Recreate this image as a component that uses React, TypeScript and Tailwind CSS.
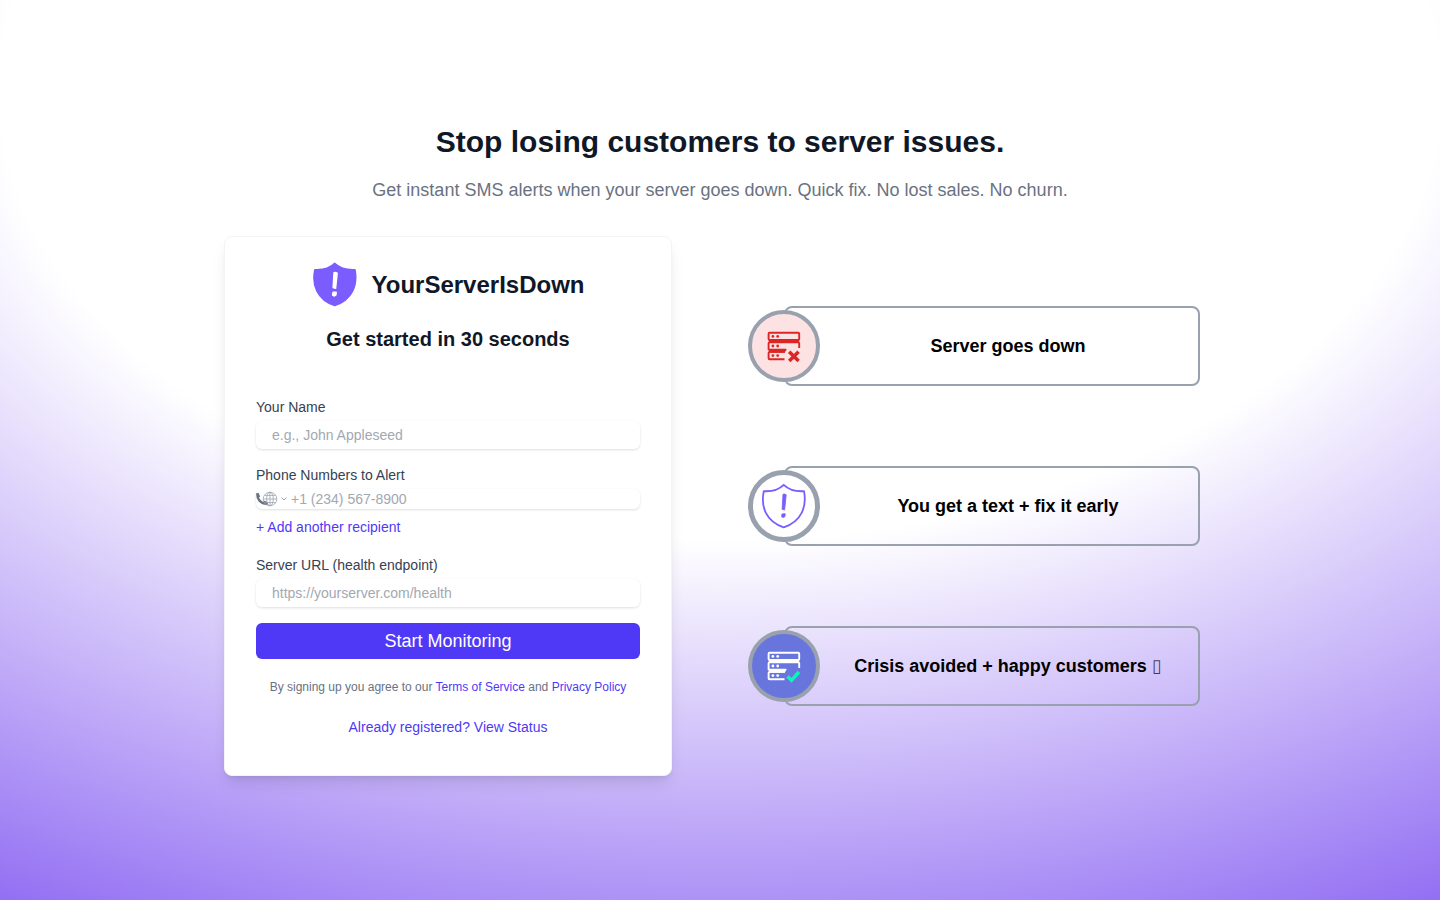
import React from "react";

const steps = [
  { text: "Server goes down", circle: "border-4 bg-[#fce2e2]", icon: <ServerIcon color="#dc2626" mark="cross" /> },
  { text: "You get a text + fix it early", circle: "border-5 bg-white", icon: <ShieldIcon className="size-12" outlined /> },
  { text: "Crisis avoided + happy customers", ending: "▯", circle: "border-4 bg-[#6875dd]", icon: <ServerIcon color="#ffffff" mark="check" /> },
];

function ShieldIcon({ className, outlined = false }: { className: string; outlined?: boolean }) {
  const markColor = outlined ? "#7a5cff" : "#ffffff";
  const markStroke = outlined ? 0.8 : 1.4;
  return (
    <svg viewBox={outlined ? "0 0 48 48" : "1 0.6 48 48"} className={`shrink-0 ${className}`} aria-hidden="true">
      <path
        d="M23.7 2.8C27.5 6.5 34.5 9.7 44 9.2C47 24.5 41.5 39.5 23.7 45.3C6 39.5 0.5 24.5 3.8 9.2C13 9.7 20 6.5 23.7 2.8Z"
        fill={outlined ? "none" : "#7a5cff"}
        stroke="#7a5cff"
        strokeWidth={outlined ? 1.8 : 1.4}
        strokeLinejoin="round"
      />
      <path d="M23 12.2Q25 11.6 26.2 12.8L24.6 28L22.1 27.3Z" fill={markColor} stroke={markColor} strokeWidth={markStroke} strokeLinejoin="round" />
      <path d="M22 31.9L25.2 31.7L25 34.5L23.4 35.6L21.6 34.8Z" fill={markColor} stroke={markColor} strokeWidth={markStroke} strokeLinejoin="round" />
    </svg>
  );
}

function ServerIcon({ color, mark }: { color: string; mark: "cross" | "check" }) {
  return (
    <svg viewBox="0 0 40 40" className="size-10" fill="none" aria-hidden="true">
      <g stroke={color} strokeWidth="1.9" strokeLinejoin="round">
        <rect x="4.6" y="6.7" width="30.6" height="7.3" rx="1" />
        <path d="M35.2 22V17.3Q35.2 16.3 34.2 16.3H5.6Q4.6 16.3 4.6 17.3V23.6H22" />
        <path d="M21 25.9H5.6Q4.6 25.9 4.6 26.9V32.2Q4.6 33.2 5.6 33.2H20.5" />
      </g>
      <path d="M5 14H35V17H5Z M5 23.2H23L20.5 26.7H5Z" fill={color} />
      {[10.4, 20, 29.6].map((y) => (
        <g key={y} fill={color}>
          <circle cx="8.9" cy={y} r="1.4" />
          <circle cx="13.7" cy={y} r="1.4" />
        </g>
      ))}
      {mark === "cross" ? (
        <path d="M25.2 25.7L34.6 35.1M34.6 25.7L25.2 35.1" stroke={color} strokeWidth="3.5" />
      ) : (
        <path d="M23.5 30.5L27.500 34.3L35 26" stroke="#0cf5b8" strokeWidth="3.5" />
      )}
    </svg>
  );
}

function PhoneIcon() {
  return (
    <svg viewBox="0 0 14 14" className="size-[14px] shrink-0" aria-hidden="true">
      <path
        d="M0 1.4L2.5 .8L4.1 4.4L3 5.8Q4.400 8.400 7.200 10L8.600 8.700L12.200 10.300L11.600 13Q6.500 13.500 2.600 9.500Q0 6.500 0 1.400Z"
        fill="#6b7280"
      />
    </svg>
  );
}

function GlobeIcon() {
  return (
    <svg viewBox="0 0 16 16" className="-ml-2 size-4 shrink-0" fill="none" stroke="#9ca3af" strokeWidth=".8" aria-hidden="true">
      <circle cx="8" cy="8" r="6.8" />
      <ellipse cx="8" cy="8" rx="3.3" ry="6.8" />
      <path d="M8 1.2V14.8M1.2 8H14.8M2.4 4.4H13.6M2.4 11.6H13.6" />
    </svg>
  );
}

const fieldClass =
  "block h-7 w-full rounded-md bg-white px-4 text-sm text-gray-900 shadow-sm placeholder:text-[#a3a8b1] focus:outline-indigo-600";

export default function App() {
  return (
    <main className="flex min-h-screen flex-col items-center justify-center bg-[radial-gradient(125%_125%_at_50%_10%,#fff_40%,#63e_100%)] px-4 py-8 font-['Liberation_Sans',Arial,sans-serif]">
      <h1 className="text-center text-3xl leading-9 font-bold text-gray-900">Stop losing customers to server issues.</h1>
      <p className="mt-4 mb-8 text-center text-lg leading-7 text-gray-500">
        Get instant SMS alerts when your server goes down. Quick fix. No lost sales. No churn.
      </p>

      <div className="grid w-full max-w-[992px] items-center gap-24 md:grid-cols-2">
        <section className="rounded-lg border border-gray-100 bg-white px-[31px] pt-6 pb-[38px] shadow-lg">
          <div className="flex items-center justify-center gap-3">
            <ShieldIcon className="size-12" />
            <span className="text-2xl font-bold text-gray-900">YourServerIsDown</span>
          </div>
          <h2 className="mt-4 text-center text-xl leading-7 font-bold text-gray-900">Get started in 30 seconds</h2>

          <form className="mt-11 text-sm leading-5" onSubmit={(event) => event.preventDefault()}>
            <label htmlFor="name" className="mb-1 block text-gray-700">Your Name</label>
            <input id="name" type="text" placeholder="e.g., John Appleseed" className={fieldClass} />

            <label htmlFor="phone" className="mt-4 mb-1 block text-gray-700">Phone Numbers to Alert</label>
            <div className="flex h-5 items-center rounded-md bg-white shadow-sm">
              <PhoneIcon />
              <GlobeIcon />
              <svg viewBox="0 0 6 4" className="mx-[3px] h-1 w-[6px] shrink-0" fill="none" stroke="#9ca3af" aria-hidden="true">
                <path d="M.5 .5L3 3L5.5 .5" />
              </svg>
              <input
                id="phone"
                type="tel"
                placeholder="+1 (234) 567-8900"
                className="ml-px h-5 min-w-0 flex-1 bg-transparent text-gray-900 outline-none placeholder:text-[#a3a8b1]"
              />
            </div>
            <button type="button" className="mt-2 block text-[#4f39f6]">+ Add another recipient</button>

            <label htmlFor="url" className="mt-[18px] mb-1 block text-gray-700">Server URL (health endpoint)</label>
            <input id="url" type="url" placeholder="https://yourserver.com/health" className={fieldClass} />

            <button type="submit" className="mt-4 h-9 w-full rounded-md bg-[#4f39f6] text-lg leading-7 text-white">
              Start Monitoring
            </button>
          </form>

          <p className="mt-5 text-center text-xs leading-4 text-gray-500">
            By signing up you agree to our <a href="#terms" className="text-[#4f39f6]">Terms of Service</a> and{" "}
            <a href="#privacy" className="text-[#4f39f6]">Privacy Policy</a>
          </p>
          <p className="mt-[22px] text-center text-sm leading-5">
            <a href="#status" className="text-[#4f39f6]">Already registered? View Status</a>
          </p>
        </section>

        <ol className="flex flex-col gap-20 px-4">
          {steps.map((step) => (
            <li key={step.text} className="relative flex h-20 items-center justify-center rounded-lg border-2 border-[#99a1af] pr-2 pl-10">
              <span
                className={`absolute top-1/2 -left-0.5 flex size-[72px] -translate-1/2 items-center justify-center rounded-full border-[#99a1af] ${step.circle}`}
              >
                {step.icon}
              </span>
              <span className="text-center text-lg leading-7 font-bold text-black">
                {step.text}
                {step.ending && <> <span className="font-['DejaVu_Sans',sans-serif] leading-none font-normal text-black/70">{step.ending}</span></>}
              </span>
            </li>
          ))}
        </ol>
      </div>
    </main>
  );
}
